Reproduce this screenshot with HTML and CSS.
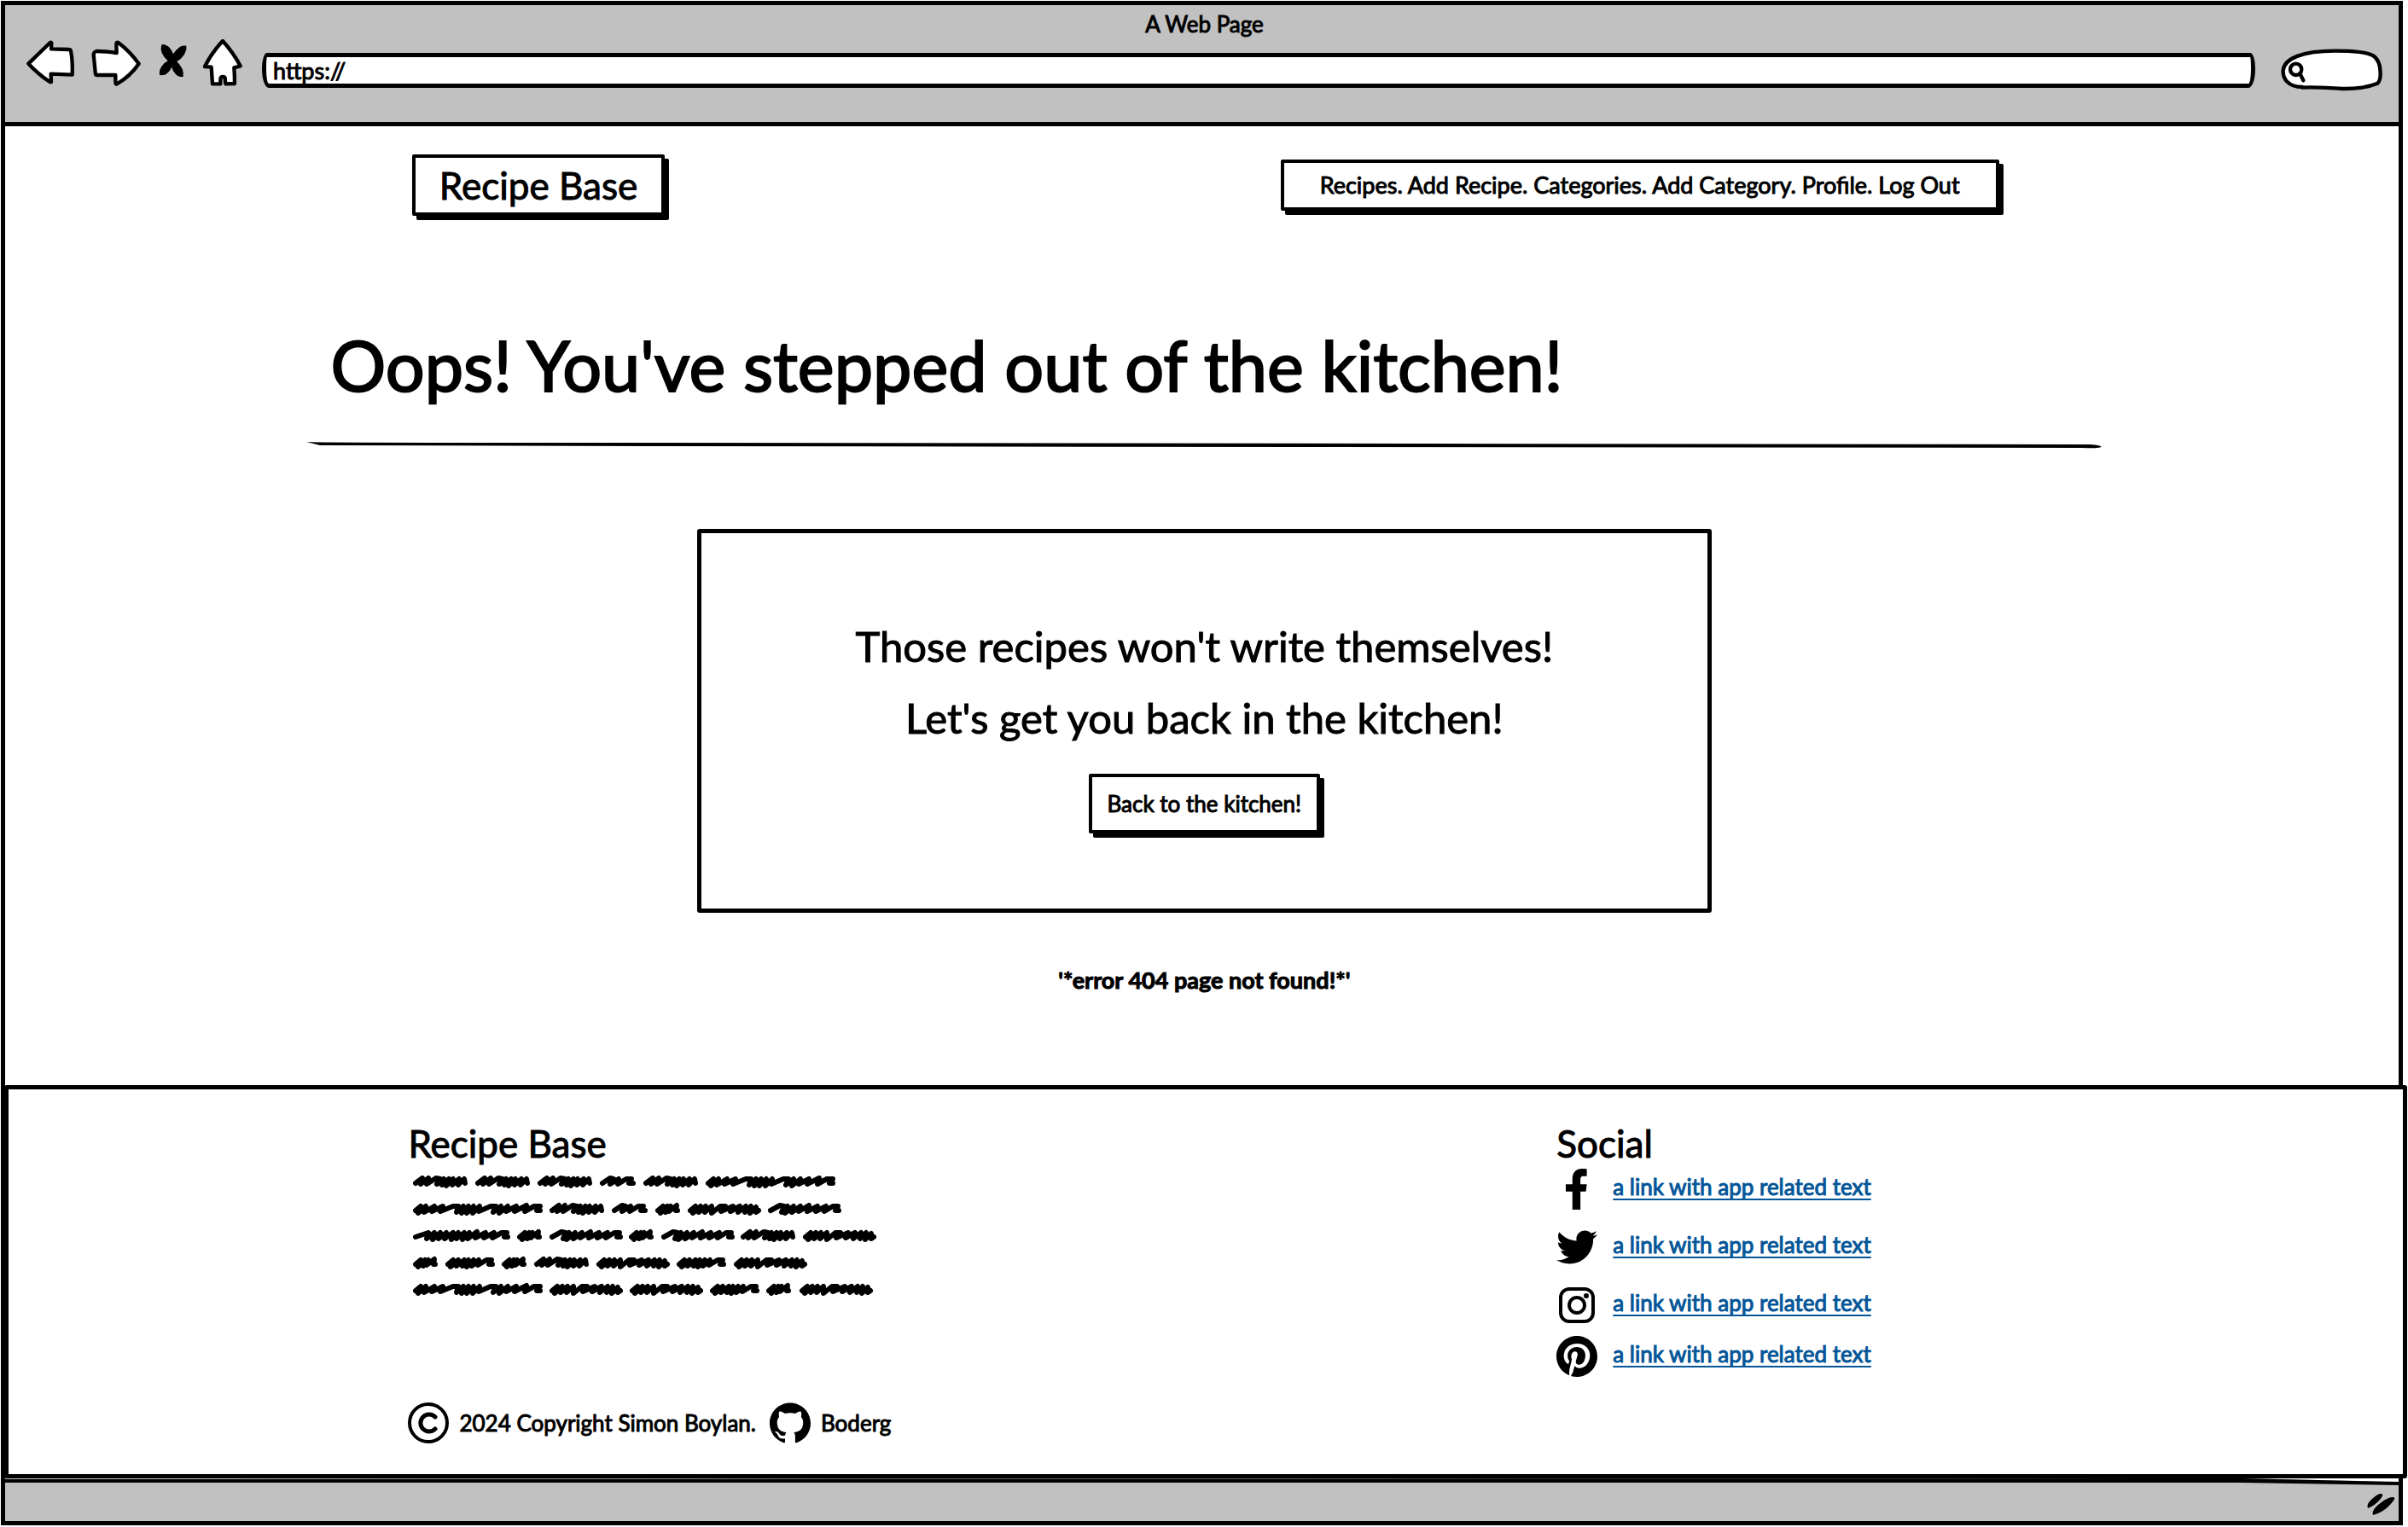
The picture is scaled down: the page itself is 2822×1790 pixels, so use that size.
FILE: index.html
```html
<!DOCTYPE html>
<html lang="en">
<head>
<meta charset="utf-8">
<meta name="viewport" content="width=device-width, initial-scale=1">
<title>Recipe Base - Page not found</title>
<link rel="stylesheet" href="styles.css">
</head>
<body>
<div class="window">
  <div class="titlebar">
    <div class="window-title">A Web Page</div>
    <div class="toolbar">
      <button class="tool" aria-label="Back"><svg width="58" height="55" viewBox="30 48 174 165"><path class="outline" d="M40 134 L116 60 Q122 56 121 66 L120 82 L182 84 Q189 84 190 94 Q196 130 194 173 L119 170 L120 196 Q120 202 112 196 Q74 170 40 134Z"/></svg></button>
      <button class="tool" aria-label="Forward"><svg width="60" height="55" viewBox="252 48 180 165"><path class="outline" d="M422 134 Q392 178 345 205 Q340 208 340 198 L340 174 L276 174 Q269 174 269 164 Q266 130 263 102 Q264 92 274 90 Q304 90 344 96 L343 66 Q343 56 350 60 Q390 90 422 134Z"/></svg></button>
      <button class="tool" aria-label="Stop"><svg width="35" height="55" viewBox="495 48 105 165"><path d="M512 66Q530 66 541 80Q549 90 552 100Q562 84 576 74Q586 70 598 71Q600 88 589 104Q580 118 565 126Q576 138 584 152Q589 164 587 180Q570 182 560 170Q550 160 547 146Q540 162 528 170Q516 176 504 174Q502 156 511 144Q520 130 533 124Q518 110 512 96Q506 80 512 66Z"/></svg></button>
      <button class="tool" aria-label="Home"><svg width="48" height="55" viewBox="648 48 144 165"><path class="outline" d="M657 144 Q682 94 720 54 Q758 96 782 142 L760 148 Q762 176 762 204 L730 205 L728 184 Q727 180 720 180 Q713 180 712 188 L712 205 L684 205 L680 146Z"/></svg></button>
      <input class="address" type="text" value="https://" aria-label="Address">
      <label class="search">
        <svg class="search-shape" width="120" height="50" viewBox="0 0 360 150" aria-hidden="true"><path class="outline" d="M75 135 C25 135 6 105 8 76 C12 35 75 8 190 8 C255 8 305 14 325 25 C345 38 350 62 350 90 Q350 112 340 122 Q290 142 215 141 C160 138 110 134 75 137Z"/><circle class="outline" cx="53" cy="73" r="20"/><path class="outline" d="M67 88L79 112"/></svg>
        <input class="search-field" type="search" aria-label="Search">
      </label>
    </div>
  </div>

  <header class="site-header">
    <a class="brand sketch-box" href="#">Recipe Base</a>
    <nav class="menu sketch-box"><a href="#">Recipes</a>. <a href="#">Add Recipe</a>. <a href="#">Categories</a>. <a href="#">Add Category</a>. <a href="#">Profile</a>. <a href="#">Log Out</a></nav>
  </header>

  <main class="content">
    <h1>Oops! You've stepped out of the kitchen!</h1>
    <svg class="rule" viewBox="0 0 2103 8" preserveAspectRatio="none" aria-hidden="true"><path d="M0 0 Q20 1 300 1 L1300 2 L2090 3 Q2103 4 2103 6 Q2098 8 2080 7 L1200 6 L400 5 L16 4Z"/></svg>
    <section class="card">
      <p>Those recipes won't write themselves!</p>
      <p>Let's get you back in the kitchen!</p>
      <button class="back sketch-box">Back to the kitchen!</button>
    </section>
    <p class="error">'*error 404 page not found!*'</p>
  </main>

  <footer class="site-footer">
    <section class="about">
      <h2>Recipe Base</h2>
      <svg class="scribble" width="547" height="142" viewBox="0 0 547 142" role="img" aria-label="About text placeholder">
        <defs>
          <path id="w4" d="M3 9L11 3L9 10L18 3L16 10L27 3L32 4L28 10L36 4L34 11L42 4L39 12L47 4L46 11L54 4L53 11L60 4L61 9"/>
          <path id="w3" d="M3 9L12 3L16 4L12 10L22 4L21 10L31 4L37 4L34 9L39 9"/>
          <path id="w2" d="M3 9L9 4L6 12L14 4L12 11L18 4L16 10L25 3L24 9L26 9"/>
          <path id="w6" d="M3 9L9 4L6 12L15 4L13 11L21 4L20 11L28 4L28 12L38 4L44 4L39 10L53 4L50 10L61 4L59 11L68 4L67 11L74 4L73 12L80 5L80 11L83 9"/>
          <path id="w5" d="M3 9L14 3L19 4L16 11L23 4L20 12L30 4L28 11L38 4L36 10L48 3L46 10L58 4L56 10L68 4L66 10L76 4L82 4L79 9L83 9"/>
          <path id="w8" d="M3 9L18 4L16 11L25 4L23 12L32 4L30 11L39 4L37 11L47 4L45 12L53 4L51 11L60 4L58 12L66 4L64 11L75 3L73 10L85 4L83 10L95 4L93 10L104 4L110 4L107 9L111 9"/>
          <path id="w7" d="M3 9L9 4L6 12L15 4L13 11L22 4L20 11L27 4L25 12L33 4L31 11L39 4L38 10L48 4L54 4L51 9L55 9"/>
          <path id="w10" d="M3 9L9 4L6 12L15 4L13 11L25 4L22 10L35 4L32 10L47 4L53 4L51 11L59 4L57 12L65 4L63 12L71 4L70 12L78 4L77 10L91 4L97 4L94 11L103 4L101 12L111 4L109 10L121 4L119 10L133 3L131 10L142 4L149 4L145 9L149 9"/>
        </defs>
        <g>
          <use href="#w4"/><use href="#w4" x="73"/><use href="#w4" x="146"/><use href="#w3" x="219"/><use href="#w4" x="270"/><use href="#w10" x="343"/>
          <use href="#w10" y="32"/><use href="#w4" x="160" y="32"/><use href="#w3" x="233" y="32"/><use href="#w2" x="284" y="32"/><use href="#w6" x="322" y="32"/><use href="#w5" x="416" y="32"/>
          <use href="#w8" y="63"/><use href="#w2" x="122" y="63"/><use href="#w5" x="160" y="63"/><use href="#w2" x="253" y="63"/><use href="#w5" x="291" y="63"/><use href="#w4" x="384" y="63"/><use href="#w6" x="457" y="63"/>
          <use href="#w2" y="95"/><use href="#w7" x="38" y="95"/><use href="#w2" x="104" y="95"/><use href="#w4" x="142" y="95"/><use href="#w6" x="215" y="95"/><use href="#w7" x="309" y="95"/><use href="#w6" x="376" y="95"/>
          <use href="#w10" y="126"/><use href="#w6" x="160" y="126"/><use href="#w6" x="254" y="126"/><use href="#w7" x="348" y="126"/><use href="#w2" x="414" y="126"/><use href="#w6" x="453" y="126"/>
        </g>
      </svg>
    </section>

    <section class="social">
      <h2>Social</h2>
      <ul>
        <li><svg width="48" height="48" viewBox="-96 0 512 512" aria-hidden="true"><path d="M284 93h-44c-30 0-36 20-36 44v58h80l-12 91h-68v226H104V286H21v-91h83v-70C104 44 152 0 222 0c30 0 50 2 62 4z"/></svg><a href="#">a link with app related text</a></li>
        <li><svg width="48" height="48" viewBox="0 0 512 512" aria-hidden="true"><path d="M459.37 151.716c.325 4.548.325 9.097.325 13.645 0 138.72-105.583 298.558-298.558 298.558-59.452 0-114.68-17.219-161.137-47.106 8.447.974 16.568 1.299 25.34 1.299 49.055 0 94.213-16.568 130.274-44.832-46.132-.975-84.792-31.188-98.112-72.772 6.498.974 12.995 1.624 19.818 1.624 9.421 0 18.843-1.3 27.614-3.573-48.081-9.747-84.143-51.98-84.143-102.985v-1.299c13.969 7.797 30.214 12.67 47.431 13.319-28.264-18.843-46.781-51.005-46.781-87.391 0-19.492 5.197-37.36 14.294-52.954 51.655 63.675 129.3 105.258 216.365 109.807-1.624-7.797-2.599-15.918-2.599-24.04 0-57.828 46.782-104.934 104.934-104.934 30.213 0 57.502 12.67 76.67 33.137 23.715-4.548 46.456-13.32 66.599-25.34-7.798 24.366-24.366 44.833-46.132 57.827 21.117-2.273 41.584-8.122 60.426-16.243-14.292 20.791-32.161 39.308-52.628 54.253z"/></svg><a href="#">a link with app related text</a></li>
        <li><svg width="48" height="48" viewBox="0 0 48 48" aria-hidden="true"><rect class="line" x="5" y="5" width="38" height="38" rx="10"/><circle class="line" cx="24" cy="24" r="9"/><circle cx="35" cy="13" r="3"/></svg><a href="#">a link with app related text</a></li>
        <li><svg width="48" height="48" viewBox="0 8 496 496" aria-hidden="true"><path d="M496 256c0 137-111 248-248 248-25.6 0-50.2-3.9-73.4-11.1 10.1-16.5 25.2-43.5 30.8-65 3-11.6 15.4-59 15.4-59 8.1 15.4 31.7 28.5 56.8 28.5 74.8 0 128.7-68.8 128.7-154.3 0-81.9-66.9-143.2-152.9-143.2-107 0-163.9 71.8-163.9 150.1 0 36.4 19.4 81.7 50.3 96.1 4.7 2.2 7.2 1.2 8.3-3.3.8-3.4 5-20.3 6.9-28.1.6-2.5.3-4.7-1.7-7.1-10.1-12.5-18.3-35.3-18.3-56.6 0-54.7 41.4-107.6 112-107.6 60.9 0 103.6 41.5 103.6 100.9 0 67.1-33.9 113.6-78 113.6-24.3 0-42.6-20.1-36.7-44.8 7-29.5 20.5-61.3 20.5-82.6 0-19-10.2-34.9-31.4-34.9-24.9 0-44.9 25.7-44.9 60.2 0 22 7.4 36.8 7.4 36.8s-24.5 103.8-29 123.2c-5 21.4-3 51.6-.9 71.2C65.4 450.9 0 361.1 0 256 0 119 111 8 248 8s248 111 248 248z"/></svg><a href="#">a link with app related text</a></li>
      </ul>
    </section>

    <div class="legal">
      <svg width="48" height="48" viewBox="0 0 48 48" aria-hidden="true"><circle class="line" cx="24" cy="24" r="22"/><path class="arc" d="M32 17A10 10 0 1 0 32 31"/></svg>
      <span>2024 Copyright Simon Boylan.</span>
      <svg class="github" width="48" height="48" viewBox="0 0 24 24" aria-hidden="true"><path d="M12 .297c-6.63 0-12 5.373-12 12 0 5.303 3.438 9.8 8.205 11.385.6.113.82-.258.82-.577 0-.285-.01-1.04-.015-2.04-3.338.724-4.042-1.61-4.042-1.61C4.422 18.07 3.633 17.7 3.633 17.7c-1.087-.744.084-.729.084-.729 1.205.084 1.838 1.236 1.838 1.236 1.07 1.835 2.809 1.305 3.495.998.108-.776.417-1.305.76-1.605-2.665-.3-5.466-1.332-5.466-5.93 0-1.31.465-2.38 1.235-3.22-.135-.303-.54-1.523.105-3.176 0 0 1.005-.322 3.3 1.23.96-.267 1.98-.399 3-.405 1.02.006 2.04.138 3 .405 2.28-1.552 3.285-1.23 3.285-1.23.645 1.653.24 2.873.12 3.176.765.84 1.23 1.91 1.23 3.22 0 4.61-2.805 5.625-5.475 5.92.42.36.81 1.096.81 2.22 0 1.606-.015 2.896-.015 3.286 0 .315.21.69.825.57C20.565 22.092 24 17.592 24 12.297c0-6.627-5.373-12-12-12"/></svg>
      <span>Boderg</span>
    </div>
  </footer>

  <div class="statusbar">
    <svg class="edge" viewBox="0 0 2805 8" preserveAspectRatio="none" aria-hidden="true"><path class="gap" d="M0 0H2805V4L2620 0Z"/><path d="M0 1L2620 0L2805 4V8L2620 5H0Z"/></svg>
    <svg class="grip" width="34" height="28" viewBox="0 0 34 28" aria-hidden="true"><path d="M2 19Q0 14 6 9Q14 1 18 2Q21 3 16 9Q10 16 2 19ZM8 27Q6 22 14 15Q26 5 32 6Q36 7 27 16Q18 25 8 27Z"/></svg>
  </div>
</div>
</body>
</html>
```
FILE: styles.css
```css
* {
  box-sizing: border-box;
}

body {
  margin: 0;
  background: #fff;
  color: #000;
  font-family: Lato, Inter, sans-serif;
  font-size: 26px;
  font-weight: 400;
  line-height: 32px;
  -webkit-text-stroke: 1px currentColor;
  overflow-x: hidden;
}

h1, h2, p, ul {
  margin: 0;
  padding: 0;
}

button, input {
  font: inherit;
  color: inherit;
}

svg {
  display: block;
  flex: none;
}

.window {
  margin: 1px 6px 0 1px;
  border: 5px solid #000;
}

/* browser chrome */
.titlebar {
  padding: 6px 18px 36px 24px;
  background: #c1c1c1;
  border-bottom: 5px solid #000;
}

.window-title {
  text-align: center;
}

.toolbar {
  display: flex;
  gap: 18px;
  height: 63px;
}

.tool {
  margin-top: 2px;
  padding: 0;
  border: 0;
  background: none;
  align-self: flex-start;
}

.outline {
  fill: #fff;
  stroke: #000;
  stroke-width: 13;
  stroke-linejoin: round;
  stroke-linecap: round;
}

.address {
  flex: 1;
  min-width: 0;
  height: 41px;
  margin: 0 12px 4px 4px;
  align-self: flex-end;
  padding: 0 8px;
  border: 5px solid #000;
  border-radius: 6px 6px 8px 8px / 18px 18px 22px 22px;
  background: #fff;
  font-size: 27px;
}

.search {
  display: grid;
  align-self: flex-end;
}

.search-shape,
.search-field {
  grid-area: 1 / 1;
}

.search-field {
  width: 76px;
  margin-left: 32px;
  border: 0;
  background: none;
}

/* site header */
.sketch-box {
  border: 4px solid #000;
  border-radius: 2px;
  background: #fff;
  box-shadow: 5px 5px 0 #000;
  color: #000;
  text-align: center;
}

.site-header {
  display: flex;
  justify-content: space-between;
  align-items: center;
  padding: 33px 16.7% 0 17%;
}

.site-header a {
  color: #000;
  text-decoration: none;
}

.brand {
  padding: 8px 28px;
  font-size: 44px;
  line-height: 48px;
}

.menu {
  padding: 10px 42px;
  font-size: 27px;
}

/* page body */
.content {
  width: 75%;
  margin-left: 12.6%;
  padding-bottom: 107px;
}

h1 {
  margin-top: 127px;
  padding-left: 28px;
  font-size: 81px;
  font-weight: 400;
  line-height: 96px;
  -webkit-text-stroke-width: 2px;
}

.rule {
  width: 100%;
  height: 8px;
  margin-top: 42px;
}

.card {
  display: flex;
  flex-direction: column;
  align-items: center;
  width: 56.5%;
  margin: 94px auto 0;
  padding: 90px 0 88px;
  border: 5px solid #000;
  border-radius: 3px;
}

.card p {
  font-size: 49px;
  line-height: 84px;
}

.back {
  margin-top: 24px;
  padding: 15px 18px;
}

.error {
  margin-top: 63px;
  font-size: 27px;
  font-weight: 700;
  text-align: center;
}

/* footer */
.site-footer {
  position: relative;
  display: grid;
  grid-template-columns: 1340fr 521fr;
  margin: 0 -10px 0 -1px;
  padding: 39px 16.7% 36px 16.7%;
  border: 5px solid #000;
  border-radius: 3px;
  background: #fff;
}

h2 {
  font-size: 44px;
  font-weight: 400;
  line-height: 48px;
}

.scribble {
  margin: 14px 0 0 6px;
  fill: none;
  stroke: #000;
  stroke-width: 6;
  stroke-linejoin: round;
  stroke-linecap: round;
}

.social ul {
  display: flex;
  flex-direction: column;
  gap: 20px;
  margin-top: 6px;
  list-style: none;
}

.social li {
  display: flex;
  align-items: center;
  gap: 18px;
}

.social li:last-child {
  margin-top: -8px;
}

.social a {
  padding-bottom: 6px;
  color: #045698;
  text-decoration-thickness: 2px;
  text-underline-offset: 4px;
  text-decoration-skip-ink: none;
}

.line,
.arc {
  fill: none;
  stroke: #000;
  stroke-width: 4;
}

.arc {
  stroke-width: 5;
  stroke-linecap: round;
}

.legal {
  display: flex;
  align-items: center;
  gap: 12px;
  margin-top: 30px;
}

.github {
  margin-left: 4px;
}

/* status bar */
.statusbar {
  display: flex;
  flex-direction: column;
  justify-content: space-between;
  height: 50px;
  background: #c1c1c1;
}

.edge {
  width: 100%;
  height: 8px;
}

.gap {
  fill: #fff;
}

.grip {
  align-self: flex-end;
  margin: 0 4px 6px 0;
}
```
